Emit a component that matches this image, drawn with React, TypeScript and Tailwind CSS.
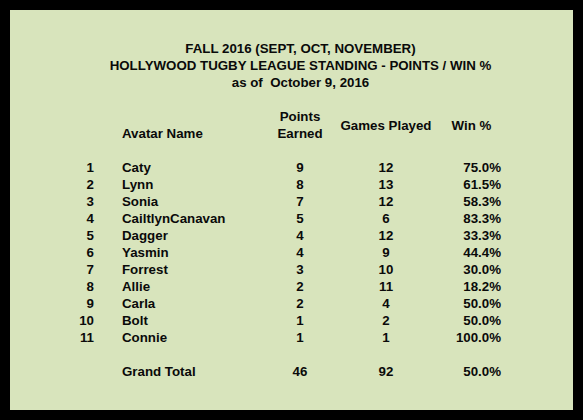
const rows: [number, string, number, number, string][] = [
  [1, "Caty", 9, 12, "75.0%"],
  [2, "Lynn", 8, 13, "61.5%"],
  [3, "Sonia", 7, 12, "58.3%"],
  [4, "CailtlynCanavan", 5, 6, "83.3%"],
  [5, "Dagger", 4, 12, "33.3%"],
  [6, "Yasmin", 4, 9, "44.4%"],
  [7, "Forrest", 3, 10, "30.0%"],
  [8, "Allie", 2, 11, "18.2%"],
  [9, "Carla", 2, 4, "50.0%"],
  [10, "Bolt", 1, 2, "50.0%"],
  [11, "Connie", 1, 1, "100.0%"],
];

const cols = "grid grid-cols-[84px_166px_80px_92px_79px] leading-[17px]";

export default function App() {
  return (
    <div
      className="w-[583px] h-[420px] bg-black p-[10px] text-[13.3px] font-bold text-[#0a0a0a]"
      style={{ fontFamily: '"Liberation Sans", Arial, sans-serif' }}
    >
      <div className="h-full bg-[#d8e4bc] pt-[30px]">
        {/* Title */}
        <div className="pl-[18px] text-center leading-[17px]">
          <div>FALL 2016 (SEPT, OCT, NOVEMBER)</div>
          <div>HOLLYWOOD TUGBY LEAGUE STANDING - POINTS / WIN %</div>
          <div className="whitespace-pre">as of  October 9, 2016</div>
        </div>

        {/* Header */}
        <div className={`${cols} mt-[17px] h-[34px] items-center`}>
          <div />
          <div className="pl-[28px] self-end">Avatar Name</div>
          <div className="text-center">
            Points
            <br />
            Earned
          </div>
          <div className="text-center">Games Played</div>
          <div className="text-center">Win %</div>
        </div>

        {/* Rows */}
        <div className="mt-[17px]">
          {rows.map(([rank, name, pts, games, win]) => (
            <div key={rank} className={`${cols} h-[17px]`}>
              <div className="text-right">{rank}</div>
              <div className="pl-[28px]">{name}</div>
              <div className="text-center">{pts}</div>
              <div className="text-center">{games}</div>
              <div className="text-right pr-[10px]">{win}</div>
            </div>
          ))}
        </div>

        {/* Total */}
        <div className={`${cols} mt-[17px] h-[17px]`}>
          <div />
          <div className="pl-[28px]">Grand Total</div>
          <div className="text-center">46</div>
          <div className="text-center">92</div>
          <div className="text-right pr-[10px]">50.0%</div>
        </div>
      </div>
    </div>
  );
}
